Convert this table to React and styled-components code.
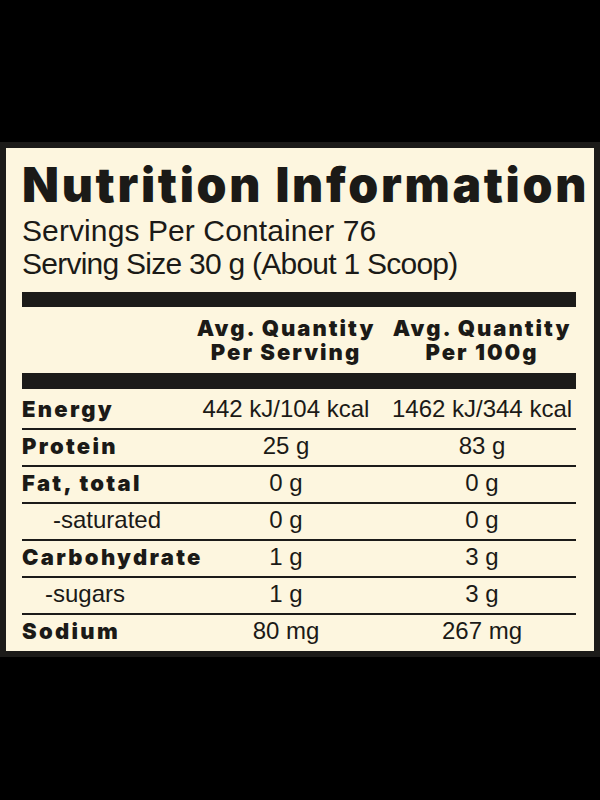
import styled, { createGlobalStyle } from 'styled-components';

const GlobalStyle = createGlobalStyle`
  html, body {
    margin: 0;
    padding: 0;
    background: #000;
  }
`;

const rows = [
  { label: 'Energy', serving: '442 kJ/104 kcal', per100: '1462 kJ/344 kcal', bold: true, first: true },
  { label: 'Protein', serving: '25 g', per100: '83 g', bold: true },
  { label: 'Fat, total', serving: '0 g', per100: '0 g', bold: true },
  { label: '-saturated', serving: '0 g', per100: '0 g', indent: 31 },
  { label: 'Carbohydrate', serving: '1 g', per100: '3 g', bold: true },
  { label: '-sugars', serving: '1 g', per100: '3 g', indent: 23 },
  { label: 'Sodium', serving: '80 mg', per100: '267 mg', bold: true, last: true },
];

export default function App() {
  return (
    <>
      <GlobalStyle />
      <Page>
        <Panel>
          <Title>Nutrition Information</Title>
          <Servings>
            <ServingLine>Servings Per Container 76</ServingLine>
            <ServingLine $tight>Serving Size 30 g (About 1 Scoop)</ServingLine>
          </Servings>
          <Bar $h={15} $mt={12} />
          <HeadRow>
            <span />
            <HeadCell>Avg. Quantity<br />Per Serving</HeadCell>
            <HeadCell>Avg. Quantity<br />Per 100g</HeadCell>
          </HeadRow>
          <Bar $h={16} />
          {rows.map((r) => (
            <Row key={r.label} $first={r.first} $last={r.last}>
              <Label $bold={r.bold} $indent={r.indent}>{r.label}</Label>
              <Value>{r.serving}</Value>
              <Value>{r.per100}</Value>
            </Row>
          ))}
        </Panel>
      </Page>
    </>
  );
}

const Page = styled.div`
  width: 600px;
  height: 800px;
  padding-top: 142px;
  box-sizing: border-box;
  background: #000;
`;

const Panel = styled.div`
  border: 6px solid #1c1b19;
  background: #fdf6df;
  padding: 0 18px 1px 16px;
  color: #1b1a17;
  font-family: 'Liberation Sans', Arial, sans-serif;
`;

const Title = styled.h1`
  margin: 13px 0 0;
  font-family: Inter, 'Liberation Sans', sans-serif;
  font-weight: 900;
  font-size: 48px;
  line-height: 48px;
  letter-spacing: 2.7px;
  white-space: nowrap;
`;

const Servings = styled.div`
  margin-top: 5px;
  font-size: 30px;
  line-height: 33px;
`;

const ServingLine = styled.div`
  white-space: nowrap;
  letter-spacing: ${(p) => (p.$tight ? '-0.75px' : '0.1px')};
`;

const Bar = styled.div`
  height: ${(p) => p.$h}px;
  margin-top: ${(p) => p.$mt || 0}px;
  background: #1c1b19;
`;

const Grid = styled.div`
  display: grid;
  grid-template-columns: 161px 206px 186px;
`;

const HeadRow = styled(Grid)`
  height: 66px;
  align-items: center;
`;

const HeadCell = styled.div`
  text-align: center;
  font-family: Inter, 'Liberation Sans', sans-serif;
  font-weight: 900;
  font-size: 22px;
  line-height: 24px;
  letter-spacing: 2px;
`;

const Row = styled(Grid)`
  box-sizing: border-box;
  height: ${(p) => (p.$first ? 41 : p.$last ? 35 : 37)}px;
  border-bottom: ${(p) => (p.$last ? 'none' : '2px solid #1c1b19')};
  align-items: end;
  padding-bottom: 7px;
`;

const Label = styled.div`
  white-space: nowrap;
  padding-left: ${(p) => p.$indent || 0}px;
  font-family: ${(p) => (p.$bold ? "Inter, 'Liberation Sans', sans-serif" : "'Liberation Sans', Arial, sans-serif")};
  font-weight: ${(p) => (p.$bold ? 900 : 400)};
  font-size: ${(p) => (p.$bold ? 22 : 24)}px;
  letter-spacing: ${(p) => (p.$bold ? '2.3px' : '0')};
  line-height: 24px;
`;

const Value = styled.div`
  text-align: center;
  white-space: nowrap;
  font-size: 24px;
  line-height: 24px;
`;
